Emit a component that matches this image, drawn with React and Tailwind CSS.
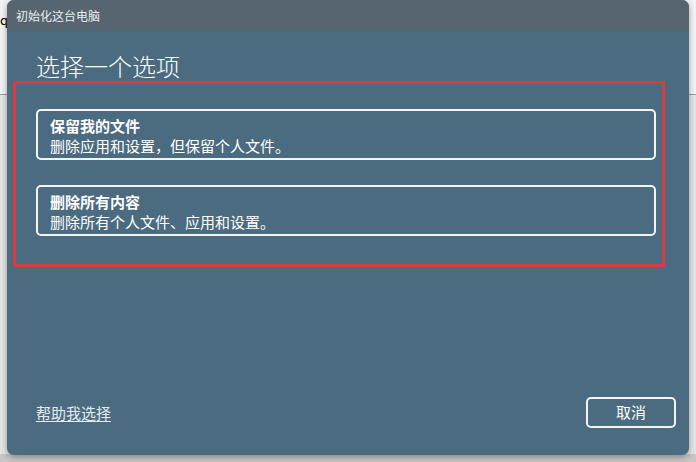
import React from 'react';

const options = [
  { title: '保留我的文件', desc: '删除应用和设置，但保留个人文件。' },
  { title: '删除所有内容', desc: '删除所有个人文件、应用和设置。' },
];

const OptionCard = ({ title, desc }) => (
  <button className="w-[620px] h-[51px] border-2 border-[#f2f4f5] rounded-[5px] pl-[12px] pt-[3px] text-left text-white cursor-pointer">
    <div className="text-[15px] leading-[20px] font-bold">{title}</div>
    <div className="text-[15px] leading-[20px]">{desc}</div>
  </button>
);

export default function App() {
  return (
    <div
      className="relative w-[696px] h-[462px] overflow-hidden bg-[#e4e4e4]"
      style={{ fontFamily: '"Noto Sans CJK SC", "Noto Sans", sans-serif' }}
    >
      {/* desktop behind the window */}
      <div className="absolute left-0 top-0 w-full h-[95px] bg-[#f3f3f3] border-b border-[#9a9a9a]" />
      <div className="absolute left-0 top-[13px] text-[13px] leading-none text-black">q</div>
      <div className="absolute left-0 bottom-0 w-full h-[8px] bg-[#c9c6c6]" />

      {/* window */}
      <div className="relative ml-[7px] w-[682px] h-[455px] rounded-[7px] overflow-hidden bg-[#4b6b80] shadow-[0_2px_6px_rgba(0,0,0,0.35)] flex flex-col">
        <div className="h-[31px] bg-[#56656f] flex items-center pl-[9px] text-[12px] text-[#e9edef]">
          初始化这台电脑
        </div>

        <div className="flex-1 flex flex-col pl-[29px] pr-[13px] pt-[19px] pb-[27px]">
          <h1 className="text-[24px] leading-[32px] font-light text-white">选择一个选项</h1>

          <div className="flex flex-col gap-[25px] mt-[27px]">
            {options.map((o) => (
              <OptionCard key={o.title} {...o} />
            ))}
          </div>

          <div className="mt-auto flex items-center justify-between">
            <a href="#" className="text-[15px] leading-[20px] text-[#e3ebf0] underline underline-offset-2">
              帮助我选择
            </a>
            <button className="w-[90px] h-[31px] border-2 border-[#f2f4f5] rounded-[5px] text-[15px] text-white">
              取消
            </button>
          </div>
        </div>

        {/* red highlight annotation */}
        <div className="absolute left-[6px] top-[81px] w-[652px] h-[186px] border-[3px] border-[#dc3a40] pointer-events-none" />
      </div>
    </div>
  );
}
